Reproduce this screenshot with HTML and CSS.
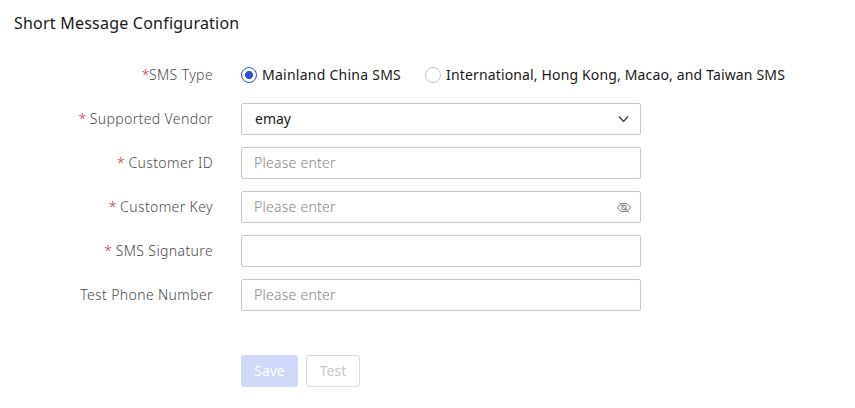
FILE: index.html
```html
<!DOCTYPE html>
<html lang="en">
<head>
<meta charset="utf-8">
<title>Short Message Configuration</title>
<link rel="stylesheet" href="styles.css">
</head>
<body>
<main class="page">
  <h1 class="title">Short Message Configuration</h1>
  <form class="form">
    <div class="row">
      <span class="label"><i class="req">*</i>SMS Type</span>
      <div class="radios">
        <span class="option domestic"><span class="radio checked"></span><span class="option-text">Mainland China SMS</span></span>
        <span class="option overseas"><span class="radio"></span><span class="option-text">International, Hong Kong, Macao, and Taiwan SMS</span></span>
      </div>
    </div>
    <div class="row">
      <span class="label"><i class="req">*</i> Supported Vendor</span>
      <div class="field"><span class="value">emay</span>
        <svg class="chevron" width="12" height="8" viewBox="0 0 12 8"><path d="M1 1.5 5.5 6.3 10 1.5"/></svg>
      </div>
    </div>
    <div class="row">
      <span class="label"><i class="req">*</i> Customer ID</span>
      <div class="field"><span class="hint">Please enter</span></div>
    </div>
    <div class="row">
      <span class="label"><i class="req">*</i> Customer Key</span>
      <div class="field"><span class="hint">Please enter</span>
        <svg class="eye" width="14" height="12" viewBox="0 0 14 12"><path d="M.6 6.5C2.2 3.7 4.3 2.3 7 2.3S11.8 3.7 13.4 6.5C11.8 9.3 9.7 10.7 7 10.7S2.2 9.3.6 6.5Z"/><circle cx="7" cy="6.5" r="2.4"/><path d="M2.2 1.5 11.8 11.5"/></svg>
      </div>
    </div>
    <div class="row">
      <span class="label"><i class="req">*</i> SMS Signature</span>
      <div class="field"></div>
    </div>
    <div class="row">
      <span class="label">Test Phone Number</span>
      <div class="field"><span class="hint">Please enter</span></div>
    </div>
    <div class="actions">
      <button class="btn save" type="button" disabled>Save</button>
      <button class="btn test" type="button" disabled>Test</button>
    </div>
  </form>
</main>
</body>
</html>
```
FILE: styles.css
```css
* { box-sizing: border-box; }
body { margin: 0; background: #fff; color: #191919; font: 14px/20px "Noto Sans", "Open Sans", sans-serif; }
.page { padding: 12px 14px; }
.title { margin: 0; font-size: 16px; line-height: 22px; font-weight: 400; letter-spacing: 0.22px; }
.form { display: flex; flex-direction: column; gap: 12px; margin-top: 25px; }
.row { display: flex; align-items: center; height: 32px; }
.label { width: 199px; margin-right: 28px; text-align: right; color: #4c4c4c; font-weight: 300; letter-spacing: 0.38px; white-space: nowrap; }
.req { color: #c8323c; font-style: normal; letter-spacing: -0.4px; }
.radios { display: flex; gap: 24px; white-space: nowrap; }
.option { display: flex; align-items: center; gap: 5px; }
.domestic { letter-spacing: 0.25px; }
.overseas { letter-spacing: 0.15px; }
.radio { width: 16px; height: 16px; border: 1px solid #c8c8c8; border-radius: 50%; }
.radio.checked { border-color: #2a52d6; background: radial-gradient(circle, #2a52d6 3.7px, transparent 4.3px); }
.field { display: flex; align-items: center; justify-content: space-between; width: 400px; height: 32px; padding: 0 10px 0 13px; border: 1px solid #c8c8c8; border-radius: 2px; }
.hint { margin-left: -1px; color: #858585; font-weight: 300; letter-spacing: 0.25px; }
.chevron, .eye { fill: none; stroke: #333; stroke-width: 1.2; }
.eye { stroke: #777; stroke-width: 1; margin-right: -1px; }
.actions { display: flex; gap: 8px; margin: 32px 0 0 227px; }
.btn { height: 32px; padding: 0; font: inherit; border-radius: 3px; }
.save { width: 57px; border: 0; background: #d0d9f7; color: #fff; }
.test { width: 54px; border: 1px solid #dcdcdc; background: #fff; color: #c8c8c8; }
```
